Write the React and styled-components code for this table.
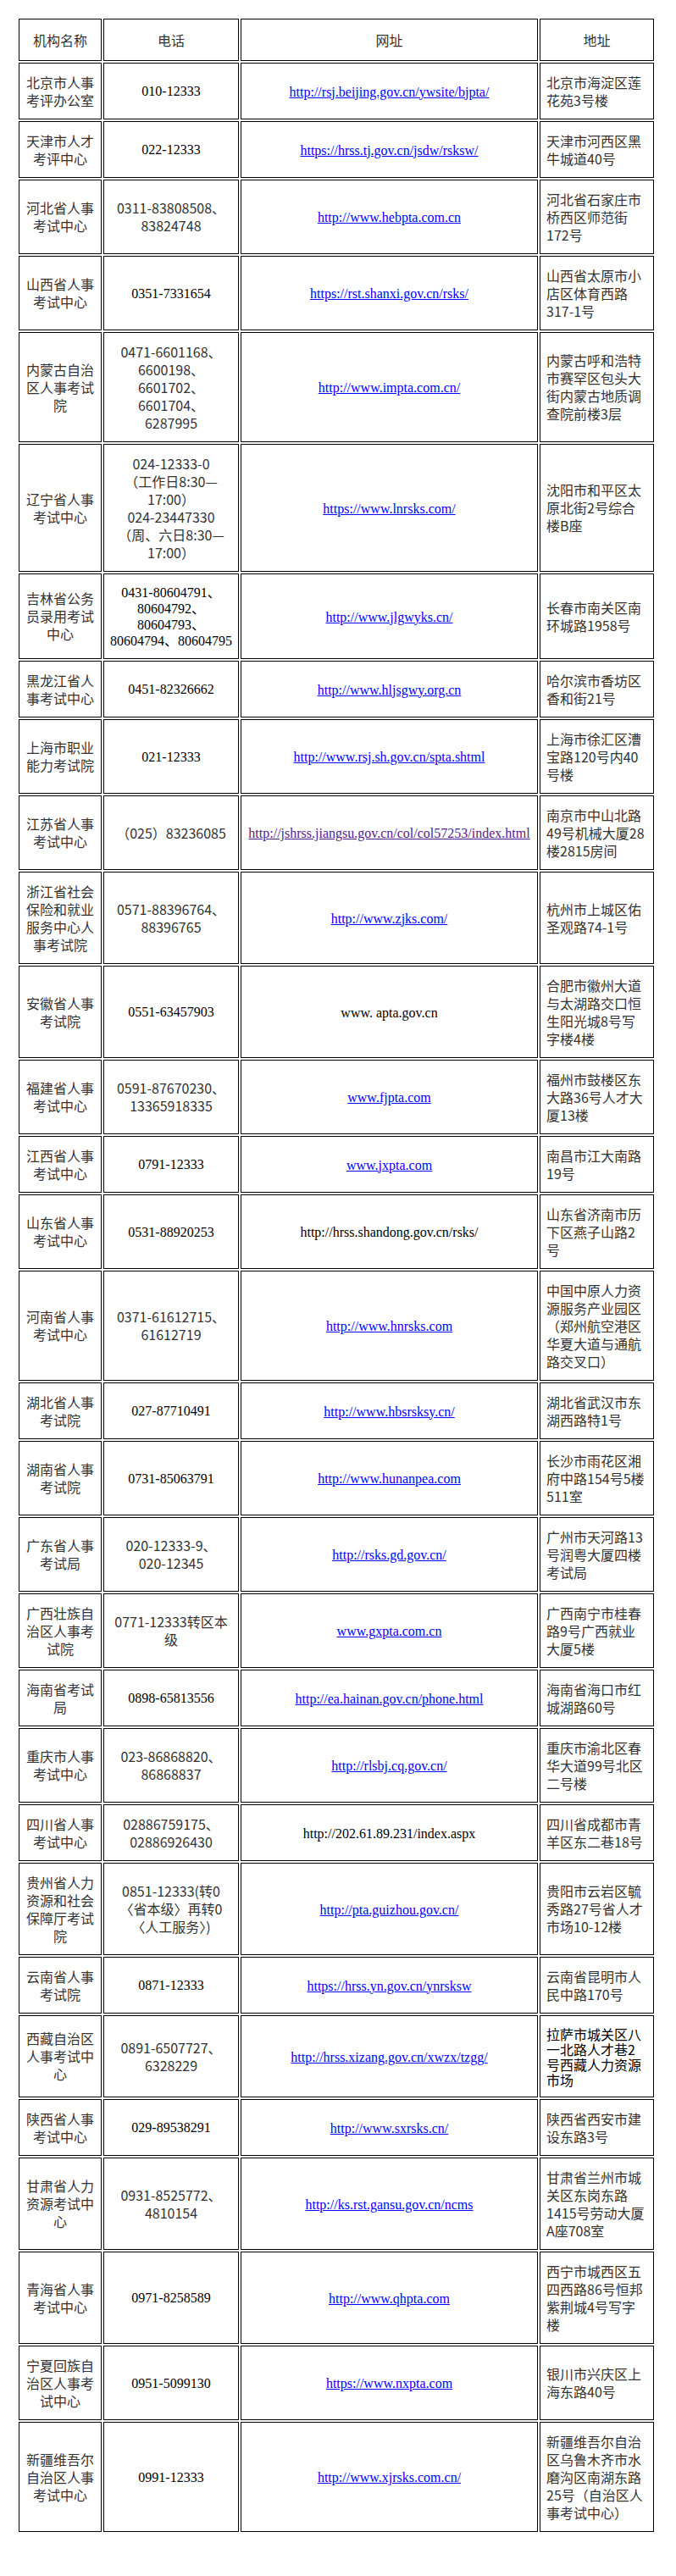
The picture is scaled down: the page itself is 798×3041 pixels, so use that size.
import React from 'react'
import styled, { createGlobalStyle } from 'styled-components'

const GlobalStyle = createGlobalStyle`
  html, body {
    margin: 0;
    padding: 0;
    background: #fff;
  }
`

const SANS = `"Noto Sans CJK SC", "Noto Sans", sans-serif`
const SERIF = `"Liberation Serif", "Noto Sans CJK SC", serif`

const Page = styled.div`
  padding: 20px 0 48px 20px;
`

const Table = styled.table`
  width: 754px;
  table-layout: fixed;
  border-collapse: separate;
  border-spacing: 2px;
  font-size: 16px;
`

const Th = styled.th`
  border: 1px solid #000;
  padding: 13.5px 7px;
  font-family: ${SANS};
  font-weight: 400;
  line-height: 21px;
  color: #333;
  text-align: center;
  vertical-align: middle;
`

const Td = styled.td`
  border: 1px solid #000;
  padding: 11.5px 7px;
  vertical-align: middle;
  text-align: ${({ $align }) => $align || 'center'};
  font-family: ${({ $serif }) => ($serif ? SERIF : SANS)};
  line-height: ${({ $serif, $song }) => ($serif ? '19px' : $song ? '18px' : '21px')};
  color: ${({ $serif, $song }) => ($serif || $song ? '#000' : '#333')};
`

const Line = styled.span`
  display: block;
  white-space: nowrap;
`

const Link = styled.a`
  font-family: ${SERIF};
  color: ${({ $visited }) => ($visited ? '#551a8b' : '#0000ff')};
  text-decoration: underline;
  white-space: nowrap;
  cursor: pointer;
`

const Plain = styled.span`
  font-family: ${SERIF};
  color: #000;
  white-space: nowrap;
`

const rows = [
  { name: ['北京市人事', '考评办公室'], phone: ['010-12333'], serif: true, url: 'http://rsj.beijing.gov.cn/ywsite/bjpta/', addr: ['北京市海淀区莲', '花苑3号楼'] },
  { name: ['天津市人才', '考评中心'], phone: ['022-12333'], serif: true, url: 'https://hrss.tj.gov.cn/jsdw/rsksw/', addr: ['天津市河西区黑', '牛城道40号'] },
  { name: ['河北省人事', '考试中心'], phone: ['0311-83808508、', '83824748'], url: 'http://www.hebpta.com.cn', addr: ['河北省石家庄市', '桥西区师范街', '172号'] },
  { name: ['山西省人事', '考试中心'], phone: ['0351-7331654'], serif: true, url: 'https://rst.shanxi.gov.cn/rsks/', addr: ['山西省太原市小', '店区体育西路', '317-1号'] },
  { name: ['内蒙古自治', '区人事考试', '院'], phone: ['0471-6601168、', '6600198、', '6601702、', '6601704、', '6287995'], url: 'http://www.impta.com.cn/', addr: ['内蒙古呼和浩特', '市赛罕区包头大', '街内蒙古地质调', '查院前楼3层'] },
  { name: ['辽宁省人事', '考试中心'], phone: ['024-12333-0', '（工作日8:30—', '17:00）', '024-23447330', '（周、六日8:30—', '17:00）'], url: 'https://www.lnrsks.com/', addr: ['沈阳市和平区太', '原北街2号综合', '楼B座'] },
  { name: ['吉林省公务', '员录用考试', '中心'], phone: ['0431-80604791、', '80604792、', '80604793、', '80604794、80604795'], serif: true, url: 'http://www.jlgwyks.cn/', addr: ['长春市南关区南', '环城路1958号'] },
  { name: ['黑龙江省人', '事考试中心'], phone: ['0451-82326662'], serif: true, url: 'http://www.hljsgwy.org.cn', addr: ['哈尔滨市香坊区', '香和街21号'] },
  { name: ['上海市职业', '能力考试院'], phone: ['021-12333'], serif: true, url: 'http://www.rsj.sh.gov.cn/spta.shtml', addr: ['上海市徐汇区漕', '宝路120号内40', '号楼'] },
  { name: ['江苏省人事', '考试中心'], phone: ['（025）83236085'], url: 'http://jshrss.jiangsu.gov.cn/col/col57253/index.html', visited: true, addr: ['南京市中山北路', '49号机械大厦28', '楼2815房间'] },
  { name: ['浙江省社会', '保险和就业', '服务中心人', '事考试院'], phone: ['0571-88396764、', '88396765'], url: 'http://www.zjks.com/', addr: ['杭州市上城区佑', '圣观路74-1号'] },
  { name: ['安徽省人事', '考试院'], phone: ['0551-63457903'], serif: true, url: 'www. apta.gov.cn', plain: true, addr: ['合肥市徽州大道', '与太湖路交口恒', '生阳光城8号写', '字楼4楼'] },
  { name: ['福建省人事', '考试中心'], phone: ['0591-87670230、', '13365918335'], url: 'www.fjpta.com', addr: ['福州市鼓楼区东', '大路36号人才大', '厦13楼'] },
  { name: ['江西省人事', '考试中心'], phone: ['0791-12333'], serif: true, url: 'www.jxpta.com', addr: ['南昌市江大南路', '19号'] },
  { name: ['山东省人事', '考试中心'], phone: ['0531-88920253'], serif: true, url: 'http://hrss.shandong.gov.cn/rsks/', plain: true, addr: ['山东省济南市历', '下区燕子山路2', '号'] },
  { name: ['河南省人事', '考试中心'], phone: ['0371-61612715、', '61612719'], url: 'http://www.hnrsks.com', addr: ['中国中原人力资', '源服务产业园区', '（郑州航空港区', '华夏大道与通航', '路交叉口）'] },
  { name: ['湖北省人事', '考试院'], phone: ['027-87710491'], serif: true, url: 'http://www.hbsrsksy.cn/', addr: ['湖北省武汉市东', '湖西路特1号'] },
  { name: ['湖南省人事', '考试院'], phone: ['0731-85063791'], serif: true, url: 'http://www.hunanpea.com', addr: ['长沙市雨花区湘', '府中路154号5楼', '511室'] },
  { name: ['广东省人事', '考试局'], phone: ['020-12333-9、', '020-12345'], url: 'http://rsks.gd.gov.cn/', addr: ['广州市天河路13', '号润粤大厦四楼', '考试局'] },
  { name: ['广西壮族自', '治区人事考', '试院'], phone: ['0771-12333转区本', '级'], url: 'www.gxpta.com.cn', addr: ['广西南宁市桂春', '路9号广西就业', '大厦5楼'] },
  { name: ['海南省考试', '局'], phone: ['0898-65813556'], serif: true, url: 'http://ea.hainan.gov.cn/phone.html', addr: ['海南省海口市红', '城湖路60号'] },
  { name: ['重庆市人事', '考试中心'], phone: ['023-86868820、', '86868837'], url: 'http://rlsbj.cq.gov.cn/', addr: ['重庆市渝北区春', '华大道99号北区', '二号楼'] },
  { name: ['四川省人事', '考试中心'], phone: ['02886759175、', '02886926430'], url: 'http://202.61.89.231/index.aspx', plain: true, addr: ['四川省成都市青', '羊区东二巷18号'] },
  { name: ['贵州省人力', '资源和社会', '保障厅考试', '院'], phone: ['0851-12333(转0', '〈省本级〉再转0', '〈人工服务〉)'], url: 'http://pta.guizhou.gov.cn/', addr: ['贵阳市云岩区毓', '秀路27号省人才', '市场10-12楼'] },
  { name: ['云南省人事', '考试院'], phone: ['0871-12333'], serif: true, url: 'https://hrss.yn.gov.cn/ynrsksw', addr: ['云南省昆明市人', '民中路170号'] },
  { name: ['西藏自治区', '人事考试中', '心'], phone: ['0891-6507727、', '6328229'], url: 'http://hrss.xizang.gov.cn/xwzx/tzgg/', addr: ['拉萨市城关区八', '一北路人才巷2', '号西藏人力资源', '市场'], song: true },
  { name: ['陕西省人事', '考试中心'], phone: ['029-89538291'], serif: true, url: 'http://www.sxrsks.cn/', addr: ['陕西省西安市建', '设东路3号'] },
  { name: ['甘肃省人力', '资源考试中', '心'], phone: ['0931-8525772、', '4810154'], url: 'http://ks.rst.gansu.gov.cn/ncms', addr: ['甘肃省兰州市城', '关区东岗东路', '1415号劳动大厦', 'A座708室'] },
  { name: ['青海省人事', '考试中心'], phone: ['0971-8258589'], serif: true, url: 'http://www.qhpta.com', addr: ['西宁市城西区五', '四西路86号恒邦', '紫荆城4号写字', '楼'] },
  { name: ['宁夏回族自', '治区人事考', '试中心'], phone: ['0951-5099130'], serif: true, url: 'https://www.nxpta.com', addr: ['银川市兴庆区上', '海东路40号'] },
  { name: ['新疆维吾尔', '自治区人事', '考试中心'], phone: ['0991-12333'], serif: true, url: 'http://www.xjrsks.com.cn/', addr: ['新疆维吾尔自治', '区乌鲁木齐市水', '磨沟区南湖东路', '25号（自治区人', '事考试中心）'] },
]

const Lines = ({ items }) => items.map((t, i) => <Line key={i}>{t}</Line>)

export default function App() {
  return (
    <Page>
      <GlobalStyle />
      <Table>
        <colgroup>
          <col style={{ width: 98 }} />
          <col style={{ width: 160 }} />
          <col style={{ width: 351 }} />
          <col style={{ width: 135 }} />
        </colgroup>
        <thead>
          <tr>
            <Th>机构名称</Th>
            <Th>电话</Th>
            <Th>网址</Th>
            <Th>地址</Th>
          </tr>
        </thead>
        <tbody>
          {rows.map((r) => (
            <tr key={r.name.join('')}>
              <Td><Lines items={r.name} /></Td>
              <Td $serif={r.serif}><Lines items={r.phone} /></Td>
              <Td>
                {r.plain ? <Plain>{r.url}</Plain> : <Link $visited={r.visited}>{r.url}</Link>}
              </Td>
              <Td $align="left" $song={r.song}><Lines items={r.addr} /></Td>
            </tr>
          ))}
        </tbody>
      </Table>
    </Page>
  )
}
